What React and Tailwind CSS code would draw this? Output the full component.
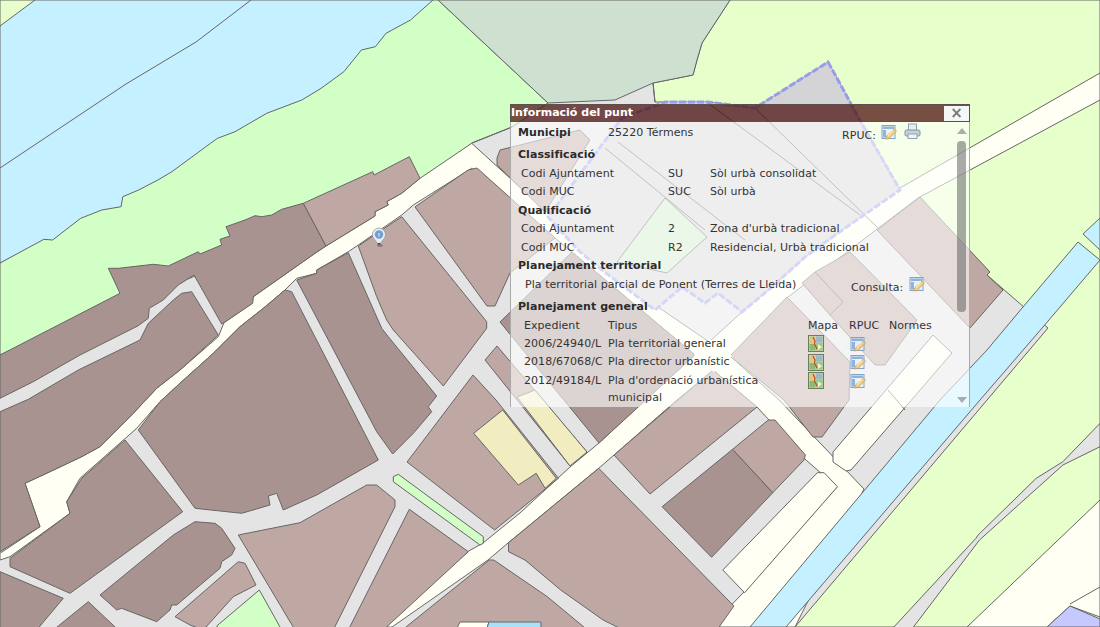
import React from "react";

const Z4 = (a) => a.map(([x, y]) => [x / 3, 140 + y / 3]);
const Z7 = (a) => a.map(([x, y]) => [400 + x / 2.24, 400 + y / 3]);
const Z8 = (a) => a.map(([x, y]) => [x / 2.85, y / 3]);
const P = (a) => a.map(([x, y]) => `${x.toFixed(1)},${y.toFixed(1)}`).join(" ");

const DARK = "#a99391";
const LIGHT = "#bfa8a3";
const CREAM = "#fffff3";
const LEMON = "#f2edc1";
const GREEN = "#d1ffc5";
const EAST = "#e7ffca";
const BLUE = "#c5f0ff";
const STROKE = "#666666";

const river = [
  [0, 0], [433, 0],
  ...Z8([[1170, 60], [1100, 100], [1070, 140], [1030, 150], [980, 215], [915, 265], [860, 300], [760, 340], [670, 395], [620, 415], [600, 430], [490, 515], [450, 540], [395, 570], [350, 590], [345, 620], [290, 630], [230, 655], [150, 720], [125, 718]]),
  [0, 263],
];

const polys = [
  { f: EAST, p: [[653, 83], [693, 75], [697, 60], [702, 43], [730, 0], [1100, 0], [1100, 627], [795, 627], [1048, 328], [987, 275], [990, 272], [900, 190], [858, 117], [838, 80], [828, 62], [755, 108], [708, 102], [655, 102]] },
  { f: GREEN, p: [[0, 263], [433, 0], [438, 0], [548, 103], [512, 127], [472, 143], [420, 185], [0, 355]] },
  { f: "#cee1d1", p: [[438, 0], [730, 0], [702, 43], [697, 60], [693, 75], [653, 83], [615, 100], [548, 103]] },
  { f: BLUE, p: river },
  { f: EAST, p: [[0, 0], [35, 0], [0, 26]] },
  // road 3
  { f: CREAM, p: [[383, 627], [467, 552], [483, 543], [520, 513], [570, 467], [599, 443], [645, 400], [742, 312], [772, 287], [805, 257], [838, 233], [900, 188], [1100, 73], [1100, 100], [918, 198], [788, 297], [732, 355], [677, 400], [614, 455], [599, 468], [508, 543], [488, 560], [392, 627]] },
  // roads 1 + 2, one outline
  { f: CREAM, p: [
    ...Z4([[1415, 10], [1260, 115], [1205, 160], [1160, 185], [1165, 195], [1125, 215], [1125, 228], [978, 318], [945, 340], [760, 470], [755, 490], [672, 548], [655, 590], [540, 690], [470, 745], [400, 820], [300, 920], [245, 950], [150, 995], [75, 1030], [120, 1160], [0, 1240], [0, 1260], [30, 1250], [210, 1120], [200, 1085], [240, 1015], [410, 865], [480, 785], [545, 725], [640, 640], [720, 560], [790, 505], [855, 450], [890, 415], [950, 400], [950, 390], [1045, 335], [1075, 315], [1205, 225], [1240, 195], [1415, 85]]),
    [757, 407], [806, 460], [837, 487], [744, 592], [710, 627], [795, 627], [864, 489], [779, 400], [730, 356], [655, 305], [578, 240],
  ] },
  // blocks left
  { f: DARK, p: Z4([[0, 645], [360, 460], [325, 385], [355, 385], [460, 373], [505, 378], [595, 335], [600, 342], [665, 315], [660, 298], [690, 288], [678, 260], [735, 240], [765, 227], [785, 230], [815, 225], [845, 208], [910, 190], [978, 318], [945, 340], [760, 470], [758, 490], [672, 548], [665, 552], [582, 405], [535, 435], [490, 480], [448, 505], [445, 535], [415, 557], [240, 645], [100, 725], [0, 775]]) },
  { f: LIGHT, p: Z4([[910, 190], [1118, 95], [1122, 105], [1228, 50], [1260, 115], [1205, 160], [1160, 185], [1165, 195], [1125, 215], [1125, 228], [978, 318]]) },
  { f: DARK, p: Z4([[0, 815], [85, 778], [235, 690], [420, 600], [445, 550], [520, 480], [545, 460], [575, 455], [655, 585], [540, 690], [470, 745], [400, 820], [300, 920], [245, 950], [150, 995], [75, 1030], [120, 1160], [0, 1235]]) },
  { f: DARK, p: Z4([[415, 870], [480, 785], [545, 725], [640, 640], [720, 560], [790, 505], [855, 450], [875, 455], [1135, 960], [950, 1065], [850, 1110], [830, 1060], [805, 1068], [810, 1095], [725, 1120], [585, 1105]]) },
  { f: DARK, p: Z4([[890, 420], [950, 400], [950, 390], [1045, 338], [1145, 565], [1165, 590], [1310, 768], [1285, 800], [1295, 815], [1240, 880], [1178, 942], [1130, 875]]) },
  { f: LIGHT, p: [[415, 207], [468, 170], [477, 168], [555, 238], [510, 273], [495, 306], [487, 306]] },
  { f: LIGHT, p: Z4([[1075, 318], [1205, 230], [1460, 545], [1460, 565], [1330, 738], [1180, 570], [1160, 540], [1130, 470]]) },
  { f: DARK, p: Z4([[245, 1015], [375, 900], [548, 1115], [210, 1360], [30, 1280], [30, 1255], [210, 1120], [200, 1085]]) },
  { f: DARK, p: Z4([[585, 1145], [645, 1150], [665, 1165], [705, 1225], [695, 1245], [665, 1265], [660, 1285], [530, 1395], [515, 1395], [510, 1410], [470, 1445], [365, 1405], [350, 1410], [300, 1365], [520, 1185]]) },
  { f: DARK, p: Z4([[0, 1295], [190, 1375], [110, 1470], [0, 1470]]) },
  { f: DARK, p: Z4([[265, 1385], [355, 1470], [160, 1470]]) },
  { f: LIGHT, p: Z4([[525, 1430], [715, 1265], [735, 1270], [768, 1335], [700, 1370], [610, 1470], [570, 1455]]) },
  { f: GREEN, p: Z4([[650, 1458], [778, 1350], [845, 1470], [660, 1470]]) },
  { f: LIGHT, p: Z4([[715, 1185], [900, 1148], [1100, 1035], [1130, 1035], [1185, 1080], [1185, 1100], [1000, 1470], [885, 1470]]) },
  { f: LIGHT, p: Z4([[1228, 1108], [1405, 1235], [1150, 1470], [1045, 1470]]) },
  { f: GREEN, p: Z4([[1180, 1010], [1195, 1003], [1450, 1190], [1450, 1210], [1440, 1215], [1180, 1025]]) },
  { f: LIGHT, p: [[407, 462], [473, 375], [496, 400], ...Z7([[355, 235], [212, 390]])] },
  { f: LEMON, p: Z7([[165, 100], [230, 30], [350, 235], [325, 265], [305, 220], [265, 255]]) },
  { f: LIGHT, p: [[485, 360], [497, 346], [587, 452], [570, 466]] },
  { f: LEMON, p: [[517, 397], [535, 390], [587, 452], [570, 466]] },
  { f: DARK, p: [[500, 322], [572, 252], [695, 355], [599, 443]] },
  { f: LIGHT, p: [[614, 455], [713, 370], [757, 407], [650, 494]] },
  { f: DARK, p: Z7([[587, 320], [745, 148], [835, 278], [698, 472]]) },
  { f: LIGHT, p: Z7([[745, 148], [825, 60], [840, 60], [908, 165], [905, 180], [835, 278]]) },
  { f: LIGHT, p: Z7([[243, 428], [445, 205], [748, 618], [710, 690], [500, 690], [455, 660], [360, 570], [280, 480], [243, 455]]) },
  { f: LIGHT, p: Z7([[200, 480], [210, 480], [330, 590], [420, 690], [5, 690]]) },
  { f: LIGHT, p: [[730, 356], [787, 297], [850, 362], [849, 400], [822, 437], [813, 437], [784, 400]] },
  // strips
  { f: CREAM, p: Z7([[723, 510], [935, 218], [950, 218], [980, 260], [772, 578]]) },
  { f: CREAM, p: [[933, 335], [952, 353], [851, 470], [846, 471], [833, 462], [833, 452]] },
  // blocks right
  { f: LIGHT, p: [[877, 230], [920, 197], [990, 272], [987, 275], [1003, 290], [970, 328]] },
  { f: LIGHT, p: [[815, 272], [850, 252], [917, 320], [885, 365], [875, 365], [830, 315], [843, 302]] },
  { f: LIGHT, p: [[802, 283], [815, 272], [843, 302], [830, 315]] },
  { f: LIGHT, p: [[497, 158], [500, 150], [580, 130], [590, 140], [545, 212], [497, 165]] },
  // canal
  { f: BLUE, p: [[750, 627], [940, 400], [987, 350], [1023, 307], [1078, 242], [1100, 260], [1043, 327], [980, 400], [786, 627]] },
  { f: BLUE, p: [[1083, 234], [1100, 218], [1100, 250]] },
  // east lower
  { f: "#e4e4e4", p: Z7([[1100, 690], [1290, 415], [1295, 405], [1425, 235], [1485, 185], [1568, 70], [1568, 140], [1485, 195], [1298, 420], [1145, 690]]) },
  { f: CREAM, p: [[967, 627], [1100, 500], [1100, 617], [1070, 606], [1047, 627]] },
  { f: "#c5c9ff", p: [[1047, 627], [1070, 606], [1100, 619], [1100, 627]] },
  { f: CREAM, p: [[457, 628], [460, 622], [489, 622], [487, 628]] },
  { f: "#a9e1f8", p: [[489, 622], [541, 622], [541, 628], [487, 628]] },
];

const selection = [[828, 62], [838, 80], [858, 117], [900, 190], [838, 233], [805, 257], [772, 287], [742, 312], [718, 293], [705, 303], [682, 287], [655, 310], [602, 270], [578, 250], [548, 217], [622, 118], [665, 102], [708, 102], [755, 108]];

const lines = [
  [[0, 168], [126, 84], [196, 42], [251, 0]],
  [[708, 103], [860, 215]],
  [[755, 108], [878, 228]],
  [[618, 142], [745, 240]],
  [[605, 148], [705, 230]],
  [[512, 127], [472, 143]],
  [[653, 83], [655, 102]],
  [[888, 390], [905, 410]],
  [[1070, 604], [1100, 587]],
];

function Map() {
  return (
    <svg width="1100" height="627" viewBox="0 0 1100 627" className="absolute inset-0">
      <rect width="1100" height="627" fill="#e4e4e4" />
      {polys.map((s, i) => (
        <polygon key={i} points={P(s.p)} fill={s.f} stroke={STROKE} strokeWidth="1" strokeLinejoin="round" />
      ))}
      <polygon points={P([[694, 355], [710, 339], [732, 356], [714, 372]])} fill={CREAM} />
      <polygon points={P(selection)} fill="#d4d4d6" stroke="none" />
      <polygon points={P([[665, 198], [707, 237], [667, 273], [617, 262]])} fill="#cdeac5" stroke={STROKE} strokeWidth="1" />
      {lines.map((l, i) => (
        <polyline key={i} points={P(l)} fill="none" stroke={STROKE} strokeWidth="1" />
      ))}
      <polygon points={P(selection)} fill="none" stroke="#9a9af0" strokeWidth="3" strokeDasharray="7 2" />
      <g>
        <ellipse cx="380" cy="245.500" rx="3" ry="1.200" fill="#000" opacity="0.3" />
        <path d="M379 246 C377 241 372.500 239 372.500 234.500 A6.500 6.500 0 0 1 385.500 234.500 C385.500 239 381 241 379 246 Z" fill="#e8ecf0" stroke="#8a8f96" strokeWidth="0.7" />
        <circle cx="379" cy="234.500" r="4.200" fill="#6f9fd2" />
        <rect x="378.500" y="233" width="1" height="3.500" fill="#e8f2ff" />
        <path d="M379 246 L377.500 243 H380.500 Z" fill="#444" />
      </g>
    </svg>
  );
}

function EditIcon() {
  return (
    <svg width="16" height="16" viewBox="0 0 16 16" className="shrink-0 opacity-85">
      <rect x="1" y="1.500" width="13" height="13" fill="#e9f1fa" stroke="#6f97c4" />
      <rect x="2" y="2.500" width="11" height="2.500" fill="#7fa8d8" />
      <rect x="2" y="6" width="3" height="7.500" fill="#7fa8d8" />
      <path d="M13.500 5 L15.500 7 L8 14.500 L4.500 15 L5.500 12 Z" fill="#efc670" stroke="#b98a3a" strokeWidth="0.7" />
      <path d="M12 6.500 L7 12" stroke="#fbe7b0" strokeWidth="1.200" />
    </svg>
  );
}

function MapIcon() {
  return (
    <svg width="16" height="17" viewBox="0 0 16 17" className="shrink-0">
      <rect x="0.500" y="0.500" width="15" height="16" fill="#c9d6a8" stroke="#6b7f5e" />
      <rect x="1.500" y="1.500" width="6" height="7" fill="#d8c98a" />
      <rect x="8" y="1.500" width="6.500" height="6" fill="#9db8c8" />
      <rect x="1.500" y="9" width="6" height="6.500" fill="#8fb870" />
      <rect x="8" y="8" width="6.500" height="7.500" fill="#9cc880" />
      <path d="M5 2 L7 6 L6.500 9 L9 14" fill="none" stroke="#c84a20" strokeWidth="1.200" />
      <path d="M10 9 L14 12 L10 15 Z" fill="#e6f5e0" />
    </svg>
  );
}

function PrinterIcon() {
  return (
    <svg width="17" height="17" viewBox="0 0 17 17" className="shrink-0">
      <rect x="4.500" y="1" width="8" height="7" fill="#e6eef2" stroke="#8fa3ad" />
      <rect x="1" y="7" width="15" height="6" rx="1.500" fill="#c3d2d8" stroke="#7f9099" />
      <rect x="4" y="11" width="9" height="4.500" fill="#eef4f6" stroke="#8fa3ad" />
    </svg>
  );
}

function Head({ children, className = "" }) {
  return <div className={`h-[18.500px] pl-[7px] font-bold leading-[18px] text-[#2b2b2b] ${className}`}>{children}</div>;
}

function Row({ a, b, c }) {
  return (
    <div className="flex h-[18.500px] items-center pl-[10px]">
      <span className="w-[147px]">{a}</span>
      <span className="w-[42px]">{b}</span>
      <span>{c}</span>
    </div>
  );
}

function PlanRow({ e, t }) {
  return (
    <div className="flex h-[18.500px] items-center pl-[13px]">
      <span className="w-[84px] whitespace-nowrap">{e}</span>
      <span className="w-[200px]">{t}</span>
      <span className="w-[42px]"><MapIcon /></span>
      <EditIcon />
    </div>
  );
}

function Panel() {
  return (
    <div className="absolute left-[510px] top-[104px] h-[303px] w-[460px] text-[11px] tracking-[0.05px] text-[#333] [font-family:'DejaVu_Sans',sans-serif]">
      <div className="flex h-[18px] items-center justify-between border border-[#5e4f4f] bg-[#501414]/75">
        <span className="font-bold tracking-normal text-white">Informació del punt</span>
        <span className="flex h-[15px] w-[25px] items-center justify-center bg-[#f6f6f6] text-[15px] font-bold leading-none text-[#777]">×</span>
      </div>
      <div className="relative h-[285px] overflow-hidden border-x border-[#aaa] bg-white/60">
        <div className="flex h-[24px] items-start pl-[7px] pt-[3px]">
          <span className="w-[90px] font-bold text-[#2b2b2b]">Municipi</span>
          <span className="w-[234px]">25220 Térmens</span>
          <span className="mt-[3px]">RPUC:</span>
          <span className="-mt-px ml-[5px]"><EditIcon /></span>
          <span className="-mt-[2px] ml-[7px]"><PrinterIcon /></span>
        </div>
        <Head>Classificació</Head>
        <Row a="Codi Ajuntament" b="SU" c="Sòl urbà consolidat" />
        <Row a="Codi MUC" b="SUC" c="Sòl urbà" />
        <Head>Qualificació</Head>
        <Row a="Codi Ajuntament" b="2" c="Zona d'urbà tradicional" />
        <Row a="Codi MUC" b="R2" c="Residencial, Urbà tradicional" />
        <Head>Planejament territorial</Head>
        <div className="flex h-[19px] items-center pl-[14px]">
          <span className="w-[326px] whitespace-nowrap">Pla territorial parcial de Ponent (Terres de Lleida)</span>
          <span className="mt-[6px] w-[58px]">Consulta:</span>
          <span className="-mt-[3px]"><EditIcon /></span>
        </div>
        <Head className="mt-[3px]">Planejament general</Head>
        <div className="flex h-[18.500px] items-center pl-[13px] pt-px">
          <span className="w-[84px]">Expedient</span>
          <span className="w-[200px]">Tipus</span>
          <span className="w-[41px]">Mapa</span>
          <span className="w-[40px]">RPUC</span>
          <span>Normes</span>
        </div>
        <PlanRow e="2006/24940/L" t="Pla territorial general" />
        <PlanRow e="2018/67068/C" t="Pla director urbanístic" />
        <PlanRow e="2012/49184/L" t="Pla d'ordenació urbanística" />
        <div className="-mt-px pl-[97px] leading-[17px]">municipal</div>
        <div className="absolute right-[2px] top-0 flex h-full w-[11px] flex-col items-center">
          <span className="mt-[6px] h-0 w-0 border-x-[5px] border-b-[6px] border-x-transparent border-b-[#999]/80" />
          <span className="mt-[7px] h-[171px] w-[9px] rounded bg-[#555]/50" />
          <span className="mt-[85px] h-0 w-0 border-x-[5px] border-t-[6px] border-x-transparent border-t-[#999]/80" />
        </div>
      </div>
    </div>
  );
}

export default function App() {
  return (
    <div className="relative h-[627px] w-[1100px] overflow-hidden">
      <Map />
      <Panel />
    </div>
  );
}
